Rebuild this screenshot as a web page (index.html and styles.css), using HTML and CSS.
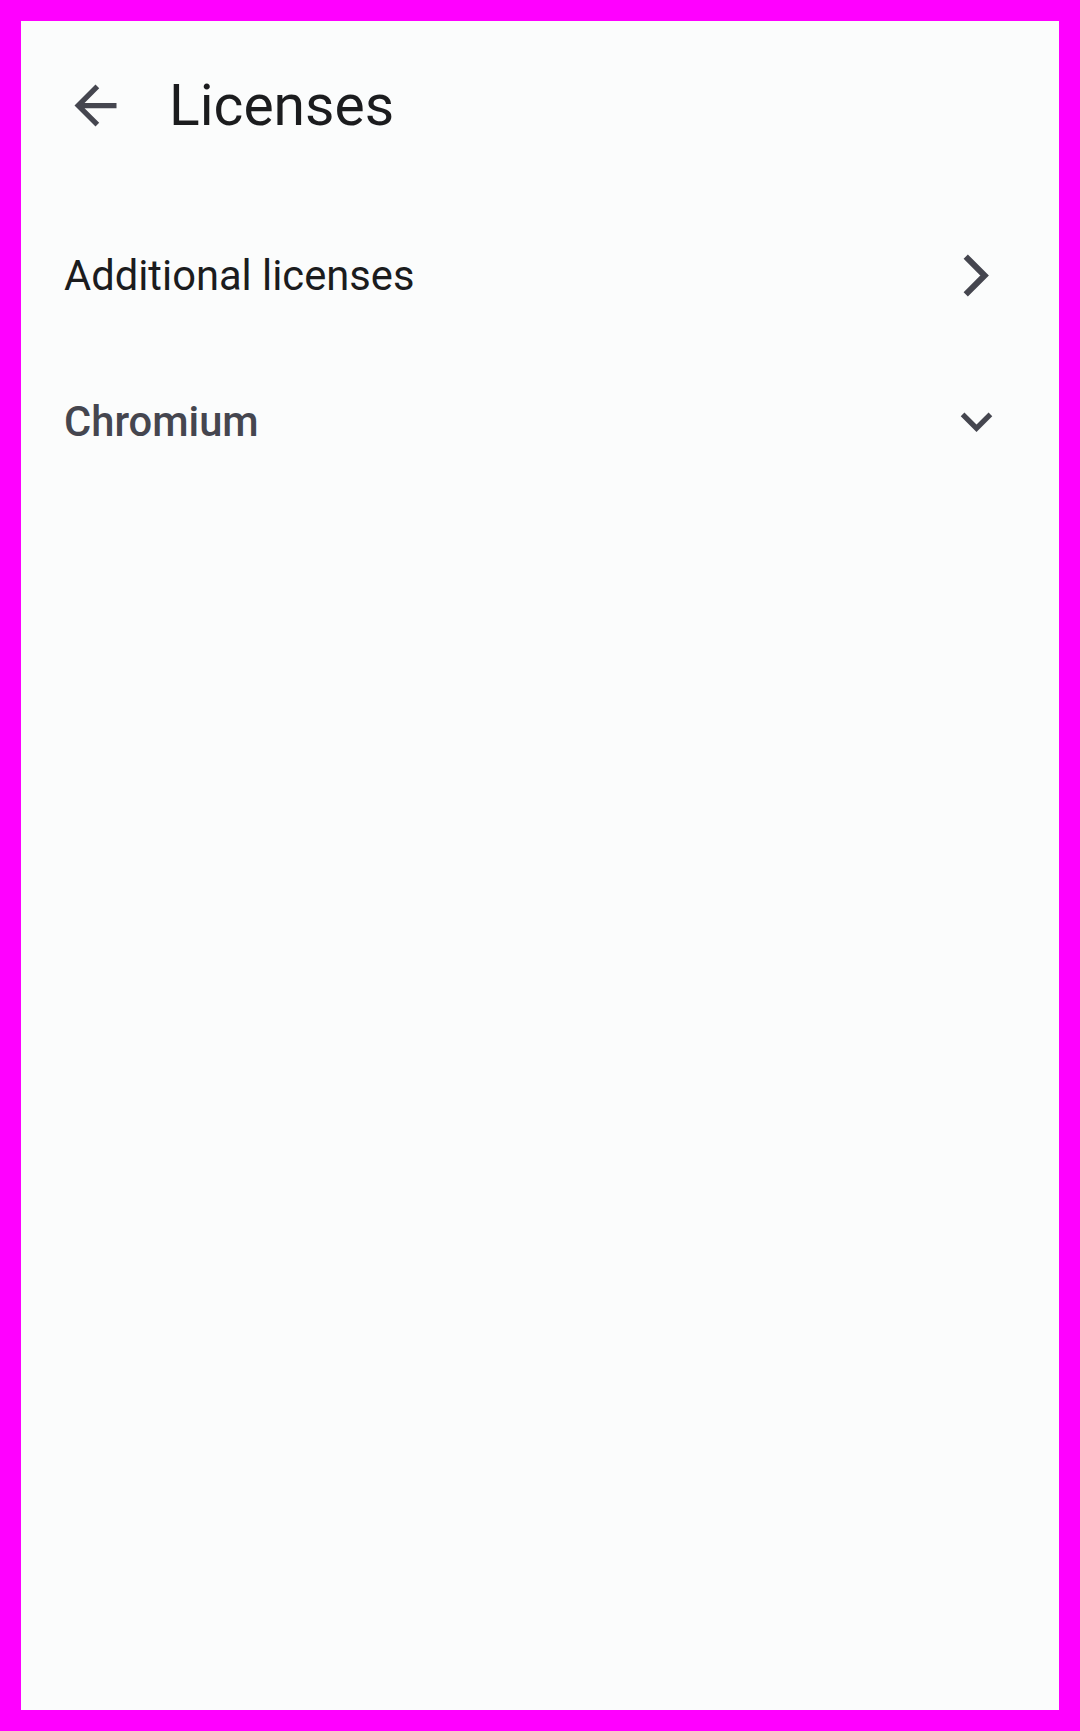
FILE: index.html
```html
<!DOCTYPE html>
<html>
<head>
<meta charset="utf-8">
<link rel="stylesheet" href="styles.css">
</head>
<body>
<div class="screen">
  <header class="appbar">
    <svg class="icon back" viewBox="0 0 24 24" width="63" height="63"><path d="M20 11H7.83l5.59-5.59L12 4l-8 8 8 8 1.41-1.41L7.83 13H20v-2z"/></svg>
    <h1 class="title">Licenses</h1>
  </header>
  <div class="row row-link">
    <span class="row-label">Additional licenses</span>
    <svg class="icon" viewBox="0 0 24 24" width="63" height="63"><path class="stroke" d="M7.9 4.8L15.1 12 7.9 19.2"/></svg>
  </div>
  <div class="row row-section">
    <span class="row-label section">Chromium</span>
    <svg class="icon" viewBox="0 0 24 24" width="63" height="63"><path d="M16.59 8.59L12 13.17 7.41 8.59 6 10l6 6 6-6z"/></svg>
  </div>
</div>
</body>
</html>
```
FILE: styles.css
```css
html, body {
  margin: 0;
  padding: 0;
}
body {
  background: #ff00ff;
  padding: 21px;
  font-family: Roboto, "Noto Sans", sans-serif;
}
.screen {
  background: #fbfcfc;
  height: 1689px;
  display: flex;
  flex-direction: column;
}
.appbar {
  height: 168px;
  display: flex;
  align-items: center;
  padding-left: 43px;
  gap: 42px;
}
.icon {
  fill: #45464f;
  flex: none;
  display: block;
}
.icon .stroke {
  fill: none;
  stroke: #45464f;
  stroke-width: 2.3;
  stroke-linecap: butt;
  stroke-linejoin: miter;
}
.title {
  margin: 0;
  font-weight: 400;
  font-size: 57px;
  color: #1b1c1e;
  line-height: 1;
}
.row {
  display: flex;
  align-items: center;
  justify-content: space-between;
  padding-left: 43px;
  padding-right: 51px;
}
.row-link {
  height: 172px;
}
.row-section {
  height: 120px;
}
.row-label {
  font-size: 41.7px;
  color: #1b1c1e;
}
.row-label.section {
  font-weight: 500;
  color: #45464f;
}
```
